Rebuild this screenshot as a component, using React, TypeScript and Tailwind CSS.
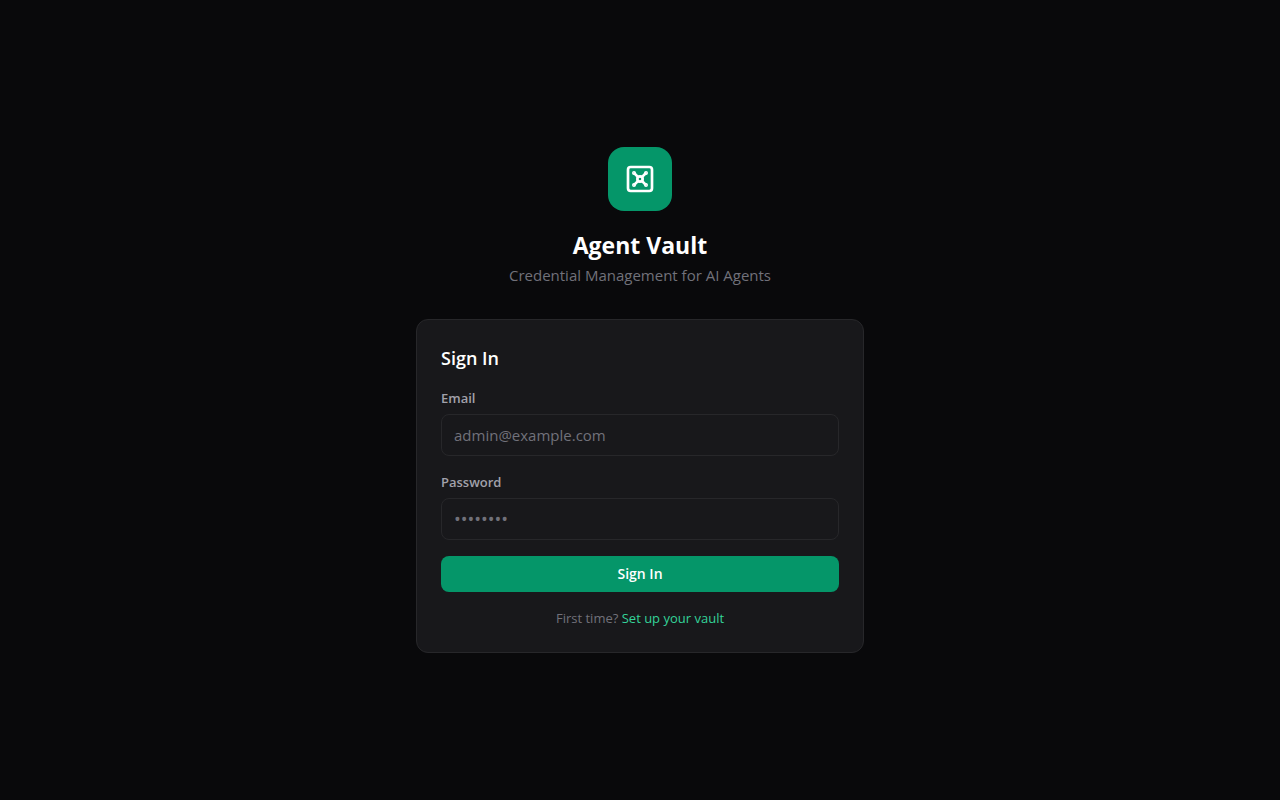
import { Vault } from 'lucide-react';

export default function App() {
  return (
    <div className="flex min-h-screen items-center justify-center bg-[#09090b] p-4 font-['Segoe_UI','Open_Sans',sans-serif]">
      <main className="w-full max-w-md">
        <header className="mb-8 text-center">
          <div className="mb-4 inline-flex h-16 w-16 items-center justify-center rounded-2xl bg-[#059669] align-top">
            <Vault className="h-8 w-8 text-white" aria-hidden="true" />
          </div>
          <h1 className="text-[23px] leading-9 font-bold text-white">Agent Vault</h1>
          <p className="text-[15px] leading-6 text-[#71717a]">Credential Management for AI Agents</p>
        </header>
        <form className="rounded-xl border border-[#27272a] bg-[#18181b] p-6" onSubmit={(e) => e.preventDefault()}>
          <h2 className="mb-4 text-lg font-semibold text-white">Sign In</h2>
          <div className="space-y-4">
            <div>
              <label htmlFor="email" className="mb-1.5 block text-[13px] leading-5 font-semibold text-[#a1a1aa]">Email</label>
              <input id="email" type="email" placeholder="admin@example.com" className="block w-full rounded-lg border border-[#27272a] px-3 py-2 text-[15px] leading-6 text-white placeholder:text-[#71717a]" />
            </div>
            <div>
              <label htmlFor="password" className="mb-1.5 block text-[13px] leading-5 font-semibold text-[#a1a1aa]">Password</label>
              <input id="password" type="password" placeholder="••••••••" className="block w-full rounded-lg border border-[#27272a] px-3 py-2 text-lg leading-6 text-white placeholder:text-[#71717a]" />
            </div>
            <button type="submit" className="block w-full rounded-lg bg-[#059669] py-2 text-sm font-semibold text-white">Sign In</button>
          </div>
          <p className="mt-4 text-center text-[13px] leading-5 text-[#71717a]">
            First time? <a href="#setup" className="text-[#34d399]">Set up your vault</a>
          </p>
        </form>
      </main>
    </div>
  );
}
